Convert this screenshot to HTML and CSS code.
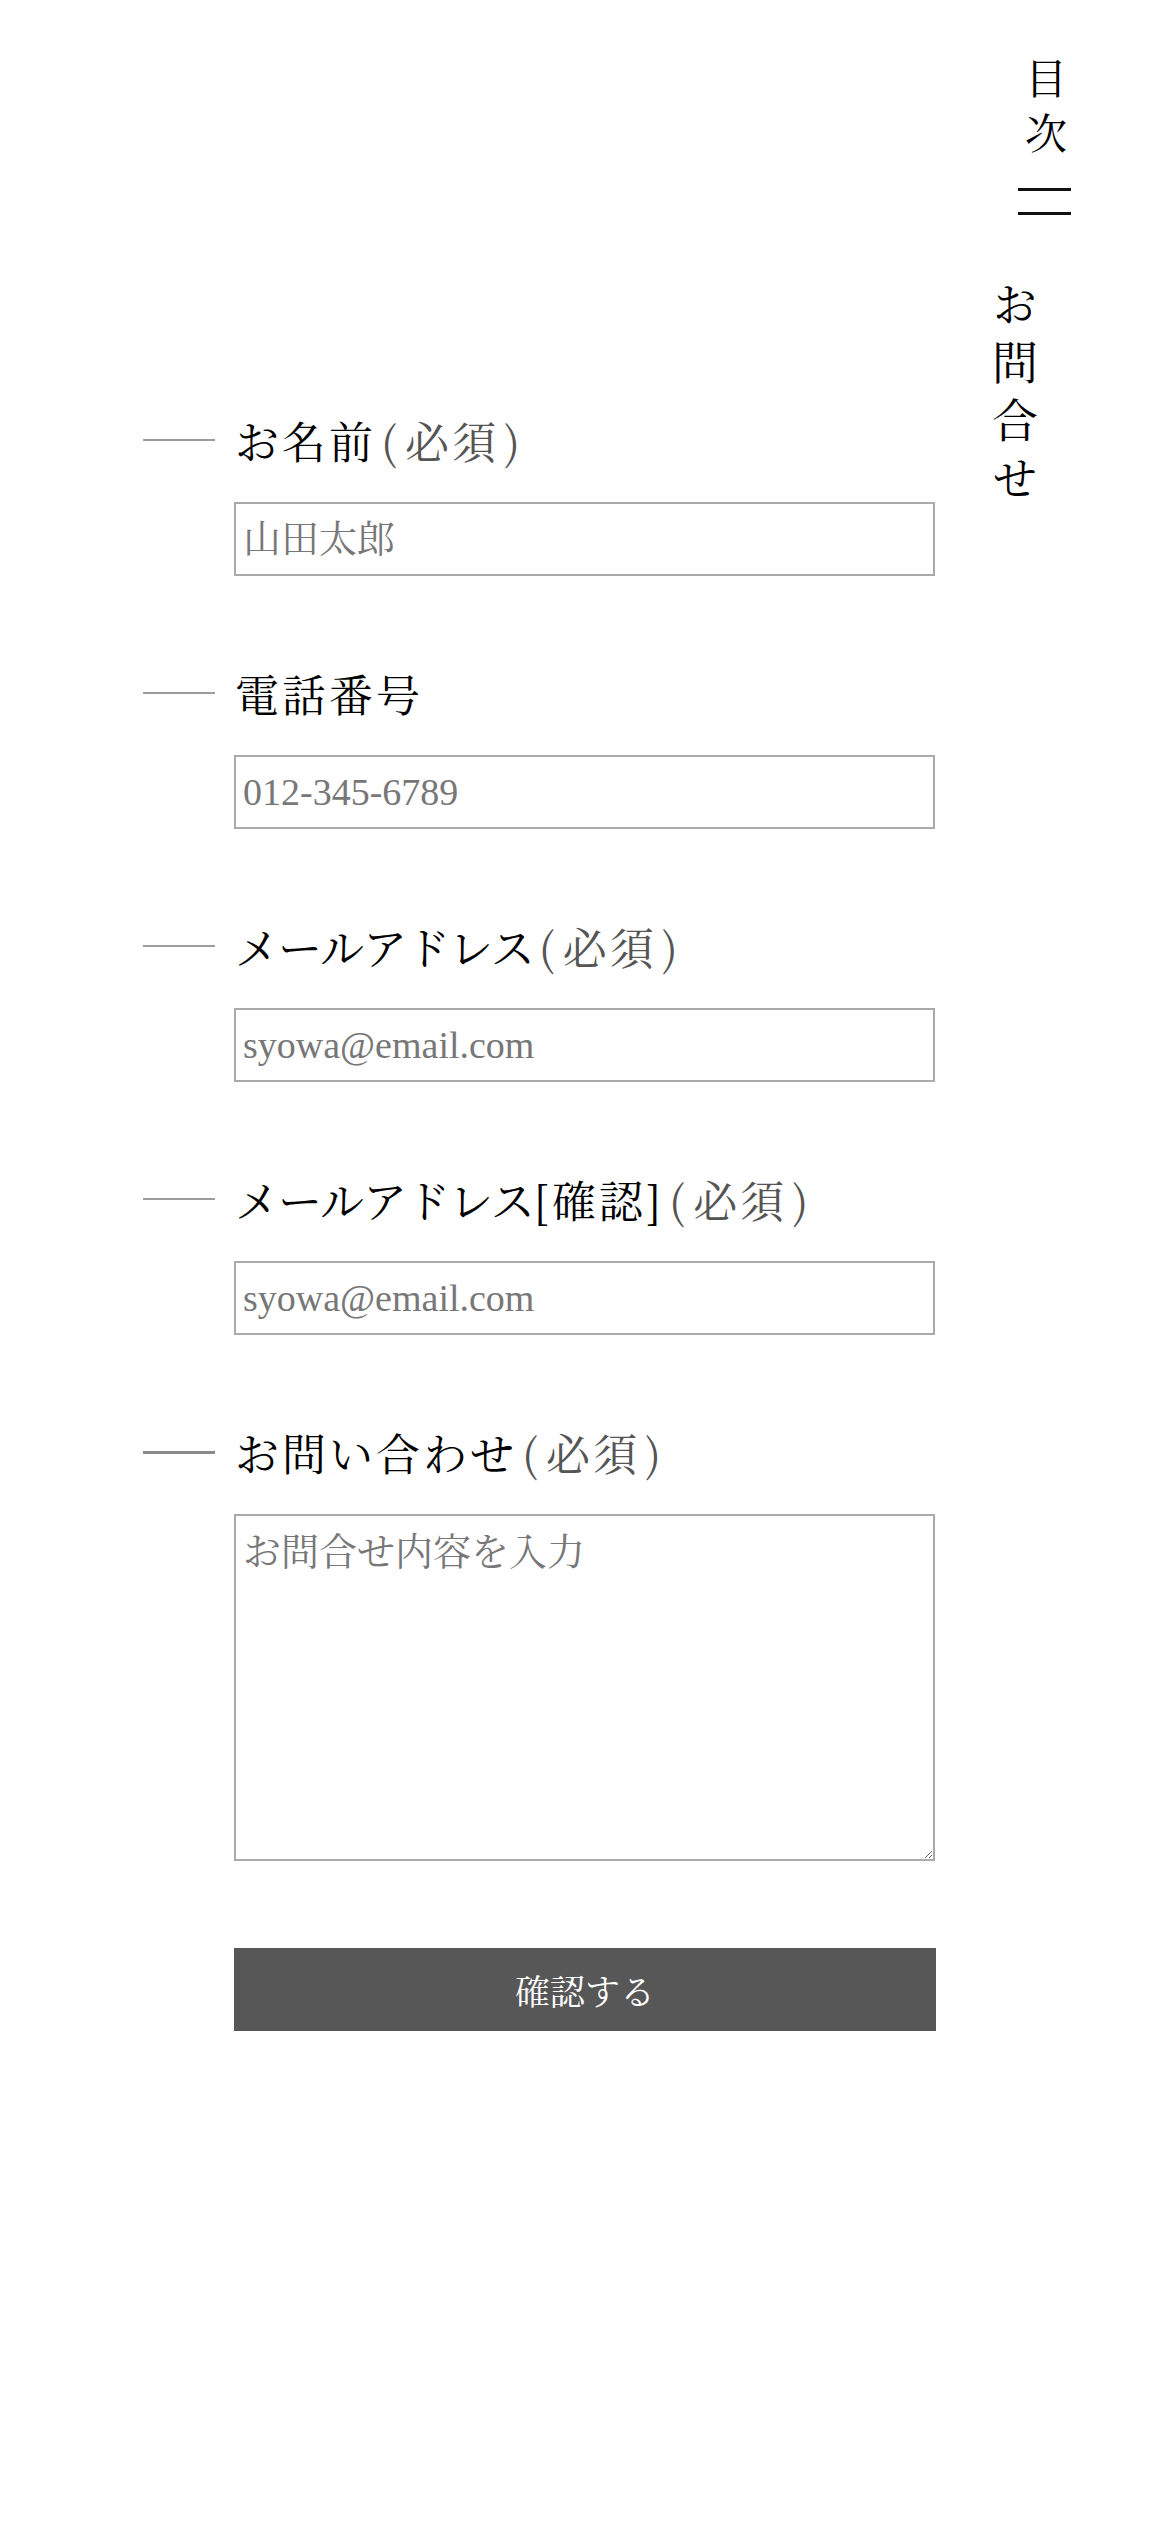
FILE: index.html
```html
<!DOCTYPE html>
<html lang="ja">
<head>
<meta charset="utf-8">
<title>お問合せ</title>
<link rel="stylesheet" href="styles.css">
</head>
<body>
<div class="page">
  <main class="form">
    <div class="field">
      <div class="label"><span class="bar"></span><span class="label-text">お名前<span class="req"><span class="paren">(</span>必須<span class="paren">)</span></span></span></div>
      <input class="input" type="text" placeholder="山田太郎">
    </div>
    <div class="field">
      <div class="label"><span class="bar"></span><span class="label-text">電話番号</span></div>
      <input class="input" type="tel" placeholder="012-345-6789">
    </div>
    <div class="field">
      <div class="label"><span class="bar"></span><span class="label-text"><span class="kana">メールアドレス</span><span class="req"><span class="paren">(</span>必須<span class="paren">)</span></span></span></div>
      <input class="input" type="email" placeholder="syowa@email.com">
    </div>
    <div class="field">
      <div class="label"><span class="bar"></span><span class="label-text"><span class="kana">メールアドレス</span>[確認]<span class="req"><span class="paren">(</span>必須<span class="paren">)</span></span></span></div>
      <input class="input" type="email" placeholder="syowa@email.com">
    </div>
    <div class="field field--last">
      <div class="label"><span class="bar bar--active"></span><span class="label-text">お問い合わせ<span class="req"><span class="paren">(</span>必須<span class="paren">)</span></span></span></div>
      <textarea class="textarea" placeholder="お問合せ内容を入力"></textarea>
    </div>
    <button class="submit" type="button">確認する</button>
  </main>
  <nav class="side">
    <div class="toc">
      <span class="toc-label">目次</span>
      <span class="toc-bar"></span>
      <span class="toc-bar"></span>
    </div>
    <a class="side-link" href="#">お問合せ</a>
  </nav>
</div>
</body>
</html>
```
FILE: styles.css
```css
* {
  box-sizing: border-box;
}

html, body {
  margin: 0;
  padding: 0;
  background: #ffffff;
}

body {
  font-family: "Noto Serif CJK JP", "Noto Sans CJK JP", serif;
  color: #000000;
  min-height: 2532px;
}

.page {
  display: flex;
  align-items: flex-start;
  padding-left: 143px;
}

.form {
  width: 792px;
  padding-top: 410px;
  display: flex;
  flex-direction: column;
}

.field {
  display: flex;
  flex-direction: column;
  margin-bottom: 87px;
}

.field--last {
  margin-bottom: 87px;
}

.label {
  display: flex;
  align-items: center;
  height: 60px;
  margin-bottom: 32px;
}

.bar {
  width: 72px;
  height: 2px;
  background: #9c9c9c;
  margin-right: 20px;
  flex: none;
}

.bar--active {
  height: 3px;
  background: #8a8a8a;
}

.label-text {
  font-size: 44px;
  letter-spacing: 3px;
  line-height: 60px;
  white-space: nowrap;
}

.kana {
  letter-spacing: -1px;
}

.req {
  color: #555555;
}

.paren {
  padding: 0 5px;
}

.input,
.textarea {
  display: block;
  margin-left: 91px;
  width: 701px;
  border: 2px solid #aaaaaa;
  border-radius: 0;
  background: #ffffff;
  font-family: "Liberation Serif", "Noto Serif CJK JP", "Noto Sans CJK JP", serif;
  font-size: 38px;
  color: #333333;
  padding: 0 7px;
  outline: none;
}

.input {
  height: 74px;
}

.textarea {
  height: 347px;
  padding-top: 5px;
  resize: vertical;
}

.input::placeholder,
.textarea::placeholder {
  color: #777777;
  opacity: 1;
}

.submit {
  display: block;
  margin-left: 91px;
  width: 702px;
  height: 83px;
  border: none;
  border-radius: 0;
  background: #575757;
  color: #ffffff;
  font-family: "Noto Serif CJK JP", "Noto Sans CJK JP", serif;
  font-size: 35px;
  cursor: pointer;
}

.side {
  margin-left: 57px;
  width: 79px;
  padding-top: 57px;
  display: flex;
  flex-direction: column;
  align-items: flex-start;
}

.toc {
  align-self: flex-end;
  width: 53px;
  display: flex;
  flex-direction: column;
  align-items: center;
}

.toc-label {
  writing-mode: vertical-rl;
  font-size: 42px;
  line-height: 42px;
  letter-spacing: 13px;
  margin-left: 3px;
}

.toc-bar {
  display: block;
  width: 53px;
  height: 3px;
  background: #111111;
  margin-top: 21px;
}

.side-link {
  writing-mode: vertical-rl;
  font-size: 46px;
  line-height: 46px;
  letter-spacing: 12px;
  color: #000000;
  text-decoration: none;
  margin-top: 66px;
}
```
